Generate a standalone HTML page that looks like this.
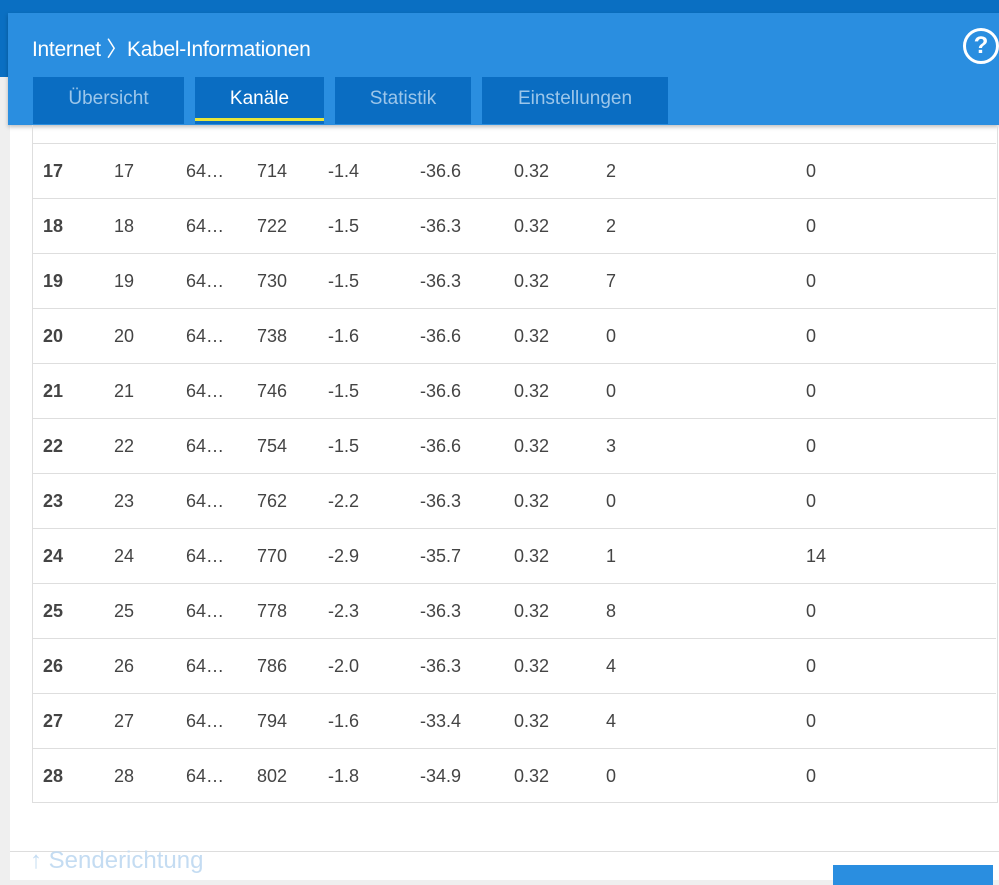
<!DOCTYPE html><html><head><style>
body{margin:0;width:999px;height:880px;overflow:hidden;background:#efefef;font-family:"Liberation Sans",sans-serif;position:relative}
.a{position:absolute}
.top{left:0;top:0;width:999px;height:77px;background:#0a6fc2}
.main{left:10px;top:77px;width:989px;height:803px;background:#fff}
.hdr{left:8px;top:13px;width:991px;height:112px;background:#2a8ee0;box-shadow:0 2px 4px rgba(0,0,0,.25)}
.title{left:32px;top:33px;color:#fff;font-size:21px;letter-spacing:-.3px}
.tab{top:77px;height:47px;background:#0a6dc2;color:#9cc6ea;font-size:19px;text-align:center;line-height:44px}
.row{left:32px;width:964px;height:55px;border-top:1px solid #dedede;font-size:18px;color:#444}
.row span{position:absolute;top:17px}
</style></head><body>
<div class="a top"></div>
<div class="a main"></div>
<div class="a hdr"></div>
<div class="a title">Internet 〉Kabel-Informationen</div>
<div class="a" style="left:963px;top:28px;width:30px;height:30px;border:3px solid #fff;border-radius:50%;color:#fff;font-weight:bold;font-size:24px;text-align:center;line-height:30px">?</div>
<div class="a tab" style="left:33px;width:151px">Übersicht</div>
<div class="a tab" style="left:195px;width:129px;color:#fff">Kanäle<div class="a" style="left:0;bottom:3px;width:129px;height:3px;background:#e8e63a"></div></div>
<div class="a tab" style="left:335px;width:136px">Statistik</div>
<div class="a tab" style="left:482px;width:186px">Einstellungen</div>
<div class="a" style="left:32px;top:125px;width:964px;height:677px;border:1px solid #dedede;border-top:none"></div>
<div id="rows"></div>
<div class="a" style="left:10px;top:851px;width:989px;border-top:1px solid #ddd"></div>
<div class="a" style="left:30px;top:847px;color:#c4dcf2;font-size:24px">↑ Senderichtung</div>
<div class="a" style="left:833px;top:865px;width:160px;height:20px;background:#2a8ee0"></div>
<script>
var d=[[17,714,-1.4,-36.6,2,0],[18,722,-1.5,-36.3,2,0],[19,730,-1.5,-36.3,7,0],[20,738,-1.6,-36.6,0,0],[21,746,-1.5,-36.6,0,0],[22,754,-1.5,-36.6,3,0],[23,762,-2.2,-36.3,0,0],[24,770,-2.9,-35.7,1,14],[25,778,-2.3,-36.3,8,0],[26,786,"-2.0",-36.3,4,0],[27,794,-1.6,-33.4,4,0],[28,802,-1.8,-34.9,0,0]];
var h="";d.forEach(function(r,i){var t=143+i*55;h+='<div class="a row" style="top:'+t+'px"><span style="left:11px;font-weight:bold">'+r[0]+'</span><span style="left:82px">'+r[0]+'</span><span style="left:154px">64…</span><span style="left:225px">'+r[1]+'</span><span style="left:296px">'+r[2]+'</span><span style="left:388px">'+r[3]+'</span><span style="left:482px">0.32</span><span style="left:574px">'+r[4]+'</span><span style="left:774px">'+r[5]+'</span></div>'});
document.getElementById("rows").innerHTML=h;
</script>
</body></html>
